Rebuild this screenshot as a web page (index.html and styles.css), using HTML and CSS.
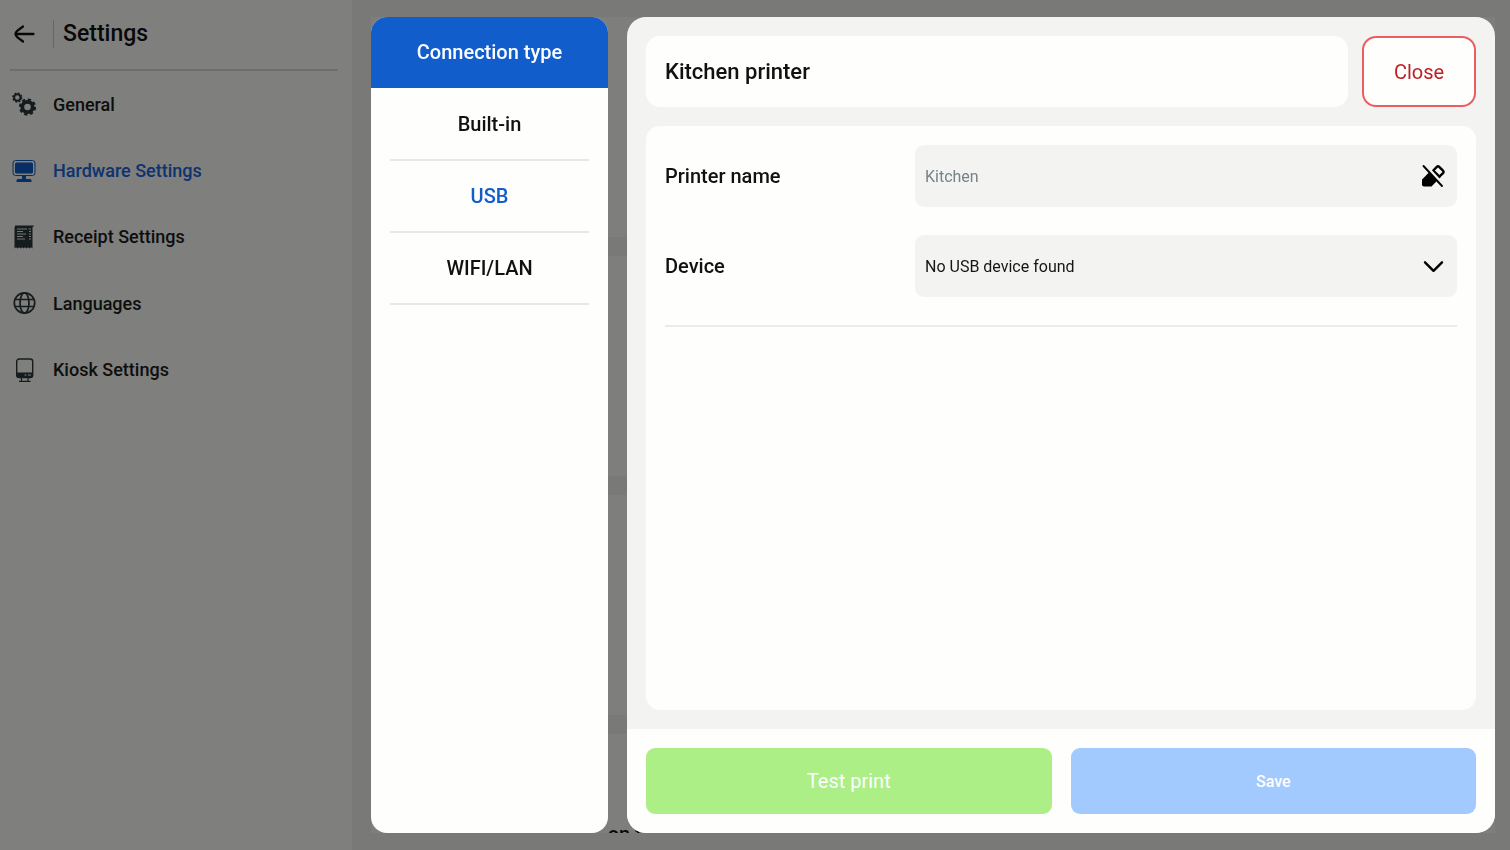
FILE: index.html
```html
<!DOCTYPE html>
<html lang="en">
<head>
<meta charset="utf-8">
<title>Settings</title>
<link rel="stylesheet" href="styles.css">
</head>
<body>
<div class="app">
  <aside class="sidebar">
    <header class="sidebar-head">
      <button class="back" type="button" aria-label="Back">
        <svg width="22" height="20" viewBox="0 0 22 20" fill="none" stroke="currentColor" stroke-width="2.3" stroke-linecap="round" stroke-linejoin="round"><path d="M20.500 10H2.500M10 2.500 4.500 6.700Q2.500 8.500 2.500 10Q2.500 11.500 4.500 13.300L10 17.500"/></svg>
      </button>
      <h1 class="sidebar-title">Settings</h1>
    </header>
    <nav class="nav">
      <a class="nav-item" href="#general">
        <svg class="nav-icon" viewBox="0 0 24 24" fill="none" stroke="currentColor">
          <circle cx="5.300" cy="5.500" r="3.200" stroke-width="2"/>
          <circle cx="5.300" cy="5.500" r="4.400" stroke-width="1.500" stroke-dasharray="1.900 1.556"/>
          <circle cx="15.500" cy="15" r="5.200" stroke-width="3.800"/>
          <circle cx="15.500" cy="15" r="7.500" stroke-width="2.200" stroke-dasharray="3.300 2.590"/>
        </svg>
        General
      </a>
      <a class="nav-item active" href="#hardware">
        <svg class="nav-icon" viewBox="0 0 24 24" fill="currentColor">
          <rect x="1" y="1.500" width="22" height="15" rx="2.500" fill="none" stroke="currentColor" stroke-width="1"/>
          <rect x="3" y="3.500" width="18" height="11" rx="1.500"/>
          <path d="M10 16.500h4V20h4a1.500 1.500 0 0 1 1.500 1.500V23h-15v-1.500A1.500 1.500 0 0 1 6 20h4z"/>
        </svg>
        Hardware Settings
      </a>
      <a class="nav-item" href="#receipt">
        <svg class="nav-icon" viewBox="0 0 24 24" fill="currentColor">
          <path d="M3 .5h18.500v1.500h-1V23.500l-1.500-1.300-1.500 1.300-1.500-1.300-1.500 1.300-1.500-1.300-1.500 1.300-1.500-1.300-1.500 1.300-1.500-1.300-1.500 1.300-1.500-1.300-1.500 1.300V2H3z"/>
          <path d="M5 4H15M5 6.500H11M5 9H14M5 11.500H11M5 14H13M16.500 4h2.500M17 6.500h2M17 9h2M17 11.500h2M17 14h2" stroke="#fefefb" stroke-width=".9"/>
        </svg>
        Receipt Settings
      </a>
      <a class="nav-item" href="#languages">
        <svg class="nav-icon" viewBox="0 0 24 24" fill="none" stroke="currentColor" stroke-width="1.700">
          <circle cx="12.500" cy="12" r="10.200"/><ellipse cx="12.500" cy="12" rx="4.500" ry="10.200"/><path d="M3.200 8.500h18.600M3.200 15.500h18.600"/>
        </svg>
        Languages
      </a>
      <a class="nav-item" href="#kiosk">
        <svg class="nav-icon" viewBox="0 0 24 24" fill="currentColor">
          <rect x="4.700" y="1" width="16" height="18.500" rx="2.500" fill="none" stroke="currentColor" stroke-width="1.400"/>
          <path d="M4.500 14.500h16.500V17a2.500 2.500 0 0 1-2.500 2.500H7A2.500 2.500 0 0 1 4.500 17z"/>
          <path d="M12.500 17h2M16 17h3" stroke="#fefefb" stroke-width="1"/>
          <path d="M9.500 19.500V23M16 19.500V23M7 23.300h11.500" fill="none" stroke="currentColor" stroke-width="1.200"/>
        </svg>
        Kiosk Settings
      </a>
    </nav>
  </aside>
  <main class="content">
    <section class="block"></section>
    <section class="block"></section>
    <section class="block"></section>
    <section class="block"><p class="block-note">- on t</p></section>
  </main>
</div>

<div class="overlay">
  <section class="types" aria-labelledby="types-title">
    <h2 class="types-title" id="types-title">Connection type</h2>
    <div class="types-list">
      <button class="type" type="button">Built-in</button>
      <button class="type selected" type="button">USB</button>
      <button class="type" type="button">WIFI/LAN</button>
    </div>
  </section>
  <form class="dialog">
    <div class="dialog-body">
      <header class="dialog-head">
        <h2 class="dialog-title">Kitchen printer</h2>
        <button class="close" type="button">Close</button>
      </header>
      <div class="card">
        <div class="fields">
          <div class="row">
            <label class="label" for="name">Printer name</label>
            <div class="field">
              <input class="control muted" id="name" type="text" value="Kitchen" readonly>
              <svg class="field-icon" viewBox="0 0 24 24" fill="currentColor">
                <path d="M1 15.500 8.200 8.300 16.300 16.400 10.500 22.500H3Q1 22.500 1 20.500z"/>
                <path d="M10.300 7.400 12 5.700l7.600 7.600-1.700 1.700z"/>
                <path d="M12.300 6.500 15.800 2.900Q17 1.800 18.200 2.900L22 6.700Q23.100 7.900 22 9.100L18.400 12.600z" fill="none" stroke="currentColor" stroke-width="2.400"/>
                <path d="M4.500 1.500 22.500 21" stroke="#f3f3f2" stroke-width="3"/>
                <path d="M2.500 2 21 22" stroke="currentColor" stroke-width="1.900" stroke-linecap="round"/>
              </svg>
            </div>
          </div>
          <div class="row">
            <label class="label" for="device">Device</label>
            <div class="field">
              <select class="control" id="device"><option>No USB device found</option></select>
              <svg class="field-icon" viewBox="0 0 24 24" fill="none" stroke="currentColor" stroke-width="2.400" stroke-linecap="round" stroke-linejoin="round"><path d="m4 8.300 8.500 8.500L21 8.300"/></svg>
            </div>
          </div>
        </div>
      </div>
    </div>
    <footer class="actions">
      <button class="action test" type="button">Test print</button>
      <button class="action save" type="submit">Save</button>
    </footer>
  </form>
</div>
</body>
</html>
```
FILE: styles.css
```css
* { box-sizing: border-box; }
body { margin: 0; font-family: Roboto, "Liberation Sans", sans-serif; color: #111; }
h1, h2, p { margin: 0; font-weight: 500; }
button, input, select { font: inherit; color: inherit; border: 0; background: none; padding: 0; margin: 0; }
button { cursor: pointer; }
svg { flex: none; }

.app { display: flex; height: 100vh; overflow: hidden; background: #f2f2ef; }
.sidebar { flex: none; width: 352px; padding: 0 14px 0 10px; background: #fefefb; }
.sidebar-head { display: flex; align-items: center; height: 71px; padding-bottom: 2px; border-bottom: 2px solid #d2dce0; }
.back { display: flex; padding: 4px 18px 4px 3px; }
.sidebar-title { padding-left: 9px; border-left: 1px solid #c4d0d6; font-size: 23px; line-height: 28px; }
.nav { display: grid; grid-auto-rows: 1fr; height: 332px; }
.nav-item { display: flex; align-items: center; gap: 17px; padding-left: 2px; font-size: 18px; font-weight: 500; color: #1a1c1c; text-decoration: none; }
.nav-icon { width: 24px; height: 24px; color: #2b383c; }
.nav-item.active { color: #1768e0; }
.nav-item.active .nav-icon { color: #0f5ecb; }

.content { flex: 1; display: flex; flex-direction: column; gap: 19px; margin: 17px 15px 17px 19px; overflow: hidden; }
.block { flex: none; height: 220px; background: #fcfcfa; }
.block-note { padding: 88px 0 0 225px; font-size: 20px; line-height: 24px; }

.overlay { position: fixed; inset: 0; display: grid; grid-template-columns: 237px 1fr; gap: 19px; padding: 17px 15px 17px 371px; background: rgba(0, 0, 0, .5); }

.types { overflow: hidden; border-radius: 16px; background: #fefefd; }
.types-title { height: 71px; background: #105dcb; color: #fefefd; font-size: 20px; line-height: 71px; text-align: center; }
.types-list { display: flex; flex-direction: column; padding: 1px 19px 0; }
.type { height: 72px; border-bottom: 2px solid #e6e9ea; font-size: 20px; font-weight: 500; }
.type.selected { color: #105dcb; }

.dialog { display: flex; flex-direction: column; overflow: hidden; border-radius: 19px; background: #f3f3f2; }
.dialog-body { flex: 1; display: flex; flex-direction: column; gap: 19px; padding: 19px; }
.dialog-head { display: flex; gap: 14px; }
.dialog-title { flex: 1; padding: 0 19px; border-radius: 14px; background: #fefefd; font-size: 22px; line-height: 71px; }
.close { width: 114px; border: 2px solid #ec5d5f; border-radius: 14px; background: #fefefd; color: #bd2025; font-size: 20px; }
.card { flex: 1; padding: 19px; border-radius: 14px; background: #fefefd; }
.fields { display: flex; flex-direction: column; gap: 28px; padding-bottom: 28px; border-bottom: 2px solid #e9eced; }
.row { display: flex; align-items: center; }
.label { flex: none; width: 250px; font-size: 20px; font-weight: 500; }
.field { flex: 1; display: flex; align-items: center; height: 62px; padding: 0 12px 0 10px; border-radius: 9px; background: #f3f3f2; color: #000; }
.control { flex: 1; min-width: 0; height: 100%; appearance: none; outline: 0; font-size: 16px; color: #161616; }
.muted { color: #75838a; }
.field-icon { width: 24px; height: 24px; }

.actions { display: grid; grid-template-columns: 1fr 1fr; gap: 19px; padding: 19px; background: #fefefd; }
.action { height: 66px; border-radius: 9px; color: #fefefd; }
.test { background: #acef87; font-size: 20px; }
.save { background: #a3caff; font-size: 16px; font-weight: 500; }
```
